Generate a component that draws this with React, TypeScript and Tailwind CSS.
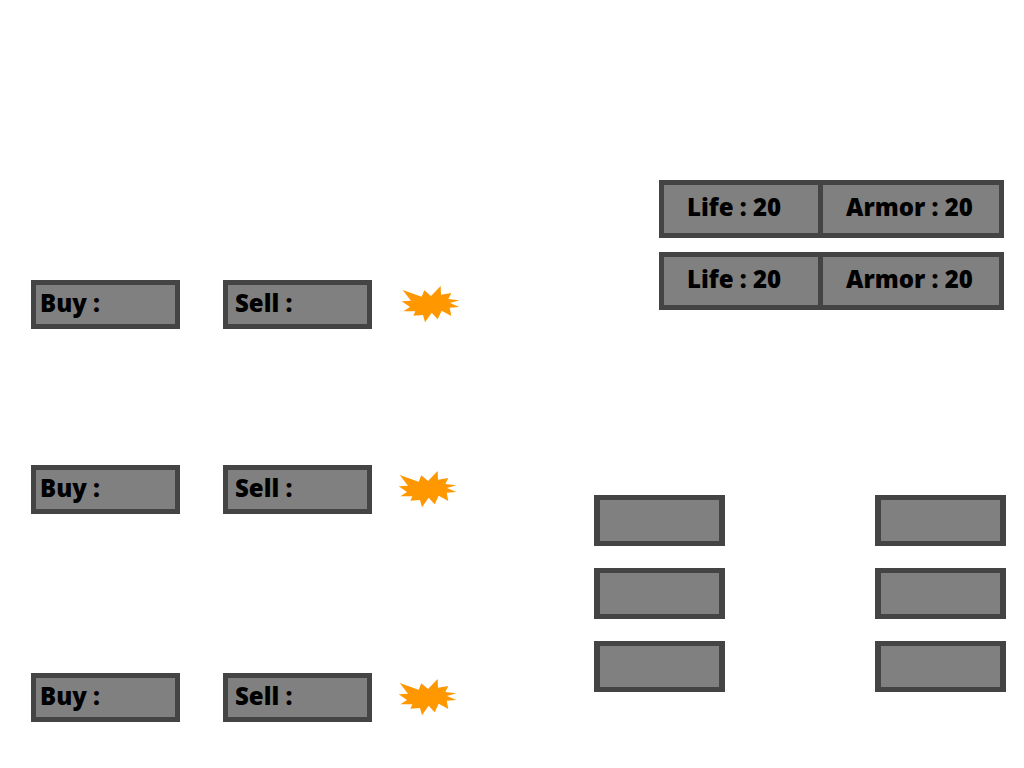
type Offer = { id: string; className: string; burst: string };

const offers: Offer[] = [
  { id: 'first', className: '', burst: 'ml-[29px]' },
  { id: 'second', className: 'mt-[136px]', burst: 'ml-[26px]' },
  { id: 'third', className: 'mt-[159px]', burst: 'ml-[26px]' },
];

const players = ['one', 'two'];
const slots = ['a', 'b', 'c', 'd', 'e', 'f'];

function Burst({ className }: { className: string }) {
  return (
    <svg
      className={`h-[41px] w-[60px] shrink-0 ${className}`}
      viewBox="0 0 180 123"
      fill="#ff9800"
      aria-hidden="true"
    >
      <path d="M5 18 62 38 70 19 90 36 119 6 120 32 151 27 142 45 175 49 147 57 175 69 146 71 151 96 122 80 110 106 92 86 72 115 66 93 37 95 43 82 7 82 27 69 2 52 30 50Z" />
    </svg>
  );
}

function PriceField({ label, className }: { label: string; className: string }) {
  return (
    <div
      className={`flex h-[49px] w-[149px] shrink-0 items-center border-[5px] border-[#444444] bg-[#808080] pb-1 ${className}`}
    >
      {label}
    </div>
  );
}

export default function App() {
  return (
    <main className="flex items-start justify-between bg-white pr-[18px] pb-[46px] pl-[31px] font-['Open_Sans','Noto_Sans',sans-serif] text-[24px] leading-7 font-extrabold text-black">
      <section aria-label="Trade" className="pt-[280px]">
        {offers.map((offer) => (
          <div key={offer.id} className={`flex items-center ${offer.className}`}>
            <PriceField label="Buy :" className="pl-1" />
            <PriceField label="Sell :" className="ml-[43px] pl-[7px]" />
            <Burst className={offer.burst} />
          </div>
        ))}
      </section>

      <section aria-label="Status" className="flex w-[412px] flex-col pt-[180px]">
        <div className="mr-0.5 flex flex-col gap-3.5 self-end">
          {players.map((player) => (
            <div
              key={player}
              className="flex h-[58px] w-[345px] border-[5px] border-[#444444] bg-[#808080]"
            >
              <div className="flex w-[159px] items-center border-r-[5px] border-[#444444] pb-1 pl-[23px]">
                Life : 20
              </div>
              <div className="flex flex-1 items-center pb-1 pl-[23px]">Armor : 20</div>
            </div>
          ))}
        </div>

        <div className="mt-[185px] grid grid-cols-2 justify-between gap-y-[22px]">
          {slots.map((slot) => (
            <div
              key={slot}
              className="h-[51px] w-[131px] border-x-[6px] border-y-[5px] border-[#444444] bg-[#808080] even:justify-self-end"
            />
          ))}
        </div>
      </section>
    </main>
  );
}
